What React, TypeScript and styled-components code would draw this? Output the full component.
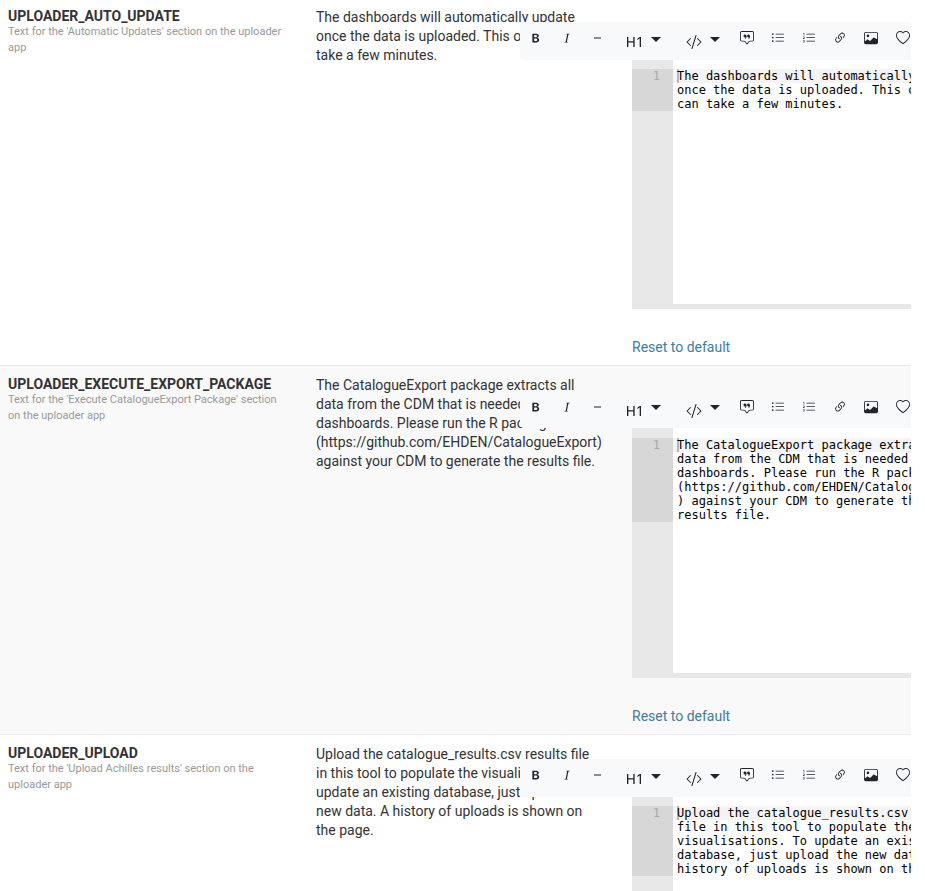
import React from 'react';
import styled, { createGlobalStyle } from 'styled-components';
import {
  BsTypeBold, BsTypeItalic, BsTypeH1, BsCodeSlash, BsChatSquareQuote,
  BsListUl, BsListOl, BsLink45Deg, BsImage, BsHeart,
} from 'react-icons/bs';

const Global = createGlobalStyle`
  * { box-sizing: border-box; }
  html, body { margin: 0; height: 891px; overflow: hidden; background: #fff; }
  body { font-family: Roboto, sans-serif; font-size: 14px; color: #333; }
`;

const Viewport = styled.main`
  width: 911px;
  height: 891px;
  overflow: hidden;
`;

const Table = styled.div`
  margin-top: -2.5px;
`;

const Row = styled.section<{ $shaded: boolean }>`
  display: grid;
  grid-template-columns: 308px 316px 287px;
  height: 368.5px;
  border-bottom: 1px solid #eaeaea;
  background: ${p => (p.$shaded ? '#f9f9f9' : '#fff')};
`;

const NameCell = styled.div`
  padding: 9px 8px;
`;

const Name = styled.div`
  font-weight: 700;
  line-height: 19px;
`;

const Help = styled.div`
  margin-top: -2px;
  font-size: 11px;
  line-height: 16px;
  color: #999;
`;

const ValueCell = styled.div`
  padding: 10px 8px;
  line-height: 19px;
  white-space: nowrap;
`;

const FieldCell = styled.div`
  padding: 24.5px 0 0 8px;
  min-width: 0;
`;

const Toolbar = styled.div`
  position: relative;
  display: flex;
  width: 391px;
  height: 37.5px;
  margin-left: -112px;
  overflow: hidden;
  border-radius: 4px 0 0 4px;
  background: #f8f9fb;
  color: #212529;
`;

const Tool = styled.span<{ $w?: number }>`
  display: flex;
  flex: none;
  align-items: center;
  justify-content: center;
  width: ${p => p.$w ?? 31}px;
  height: 32px;
`;

const DropTool = styled(Tool)<{ $gap: number }>`
  gap: ${p => p.$gap}px;
`;

const Dash = styled.span`
  width: 7px;
  height: 2px;
  background: #8c8f92;
`;

const DropIcon = styled.span`
  display: flex;
  margin-top: 8px;
`;

const Caret = styled.span`
  border: 5px solid transparent;
  border-top-color: #212529;
  border-bottom: 0;
  margin-top: 2px;
`;

const Editor = styled.div`
  display: flex;
  height: 249.5px;
  border-bottom: 5px solid #e8e8e8;
  background: #fff;
  font: 12px/14px "DejaVu Sans Mono", monospace;
  color: #000;
  overflow: hidden;
`;

const Gutter = styled.div`
  flex: none;
  width: 41px;
  padding-top: 9.5px;
  background: #e8e8e8;
`;

const LineNumber = styled.div<{ $lines: number }>`
  height: ${p => p.$lines * 14}px;
  padding-right: 13px;
  background: #d7d7d7;
  color: #aaa;
  text-align: right;
`;

const Code = styled.div`
  flex: 1;
  min-width: 0;
  padding-top: 9.5px;
  overflow: hidden;
`;

const CodeLine = styled.div<{ $active: boolean }>`
  position: relative;
  isolation: isolate;
  height: 14px;
  padding-left: 4px;
  white-space: pre;
  background: ${p => (p.$active ? '#f4f4f4' : 'transparent')};
`;

const Cursor = styled.i`
  position: absolute;
  z-index: -1;
  left: 4px;
  top: 0;
  width: 2px;
  height: 14px;
  background: #b8b8b8;
`;

const Reset = styled.a`
  display: block;
  margin-top: 29px;
  line-height: 19px;
  color: #417d9c;
`;

const settings = [
  {
    name: 'UPLOADER_AUTO_UPDATE',
    help: ["Text for the 'Automatic Updates' section on the uploader", 'app'],
    value: ['The dashboards will automatically update', 'once the data is uploaded. This operation can', 'take a few minutes.'],
    code: ['The dashboards will automatically update', 'once the data is uploaded. This operation', 'can take a few minutes.'],
  },
  {
    name: 'UPLOADER_EXECUTE_EXPORT_PACKAGE',
    help: ["Text for the 'Execute CatalogueExport Package' section", 'on the uploader app'],
    value: ['The CatalogueExport package extracts all', 'data from the CDM that is needed for the', 'dashboards. Please run the R package', '(https://github.com/EHDEN/CatalogueExport)', 'against your CDM to generate the results file.'],
    code: ['The CatalogueExport package extracts all', 'data from the CDM that is needed for the', 'dashboards. Please run the R package', '(https://github.com/EHDEN/CatalogueExport', ') against your CDM to generate the', 'results file.'],
  },
  {
    name: 'UPLOADER_UPLOAD',
    help: ["Text for the 'Upload Achilles results' section on the", 'uploader app'],
    value: ['Upload the catalogue_results.csv results file', 'in this tool to populate the visualisations. To', 'update an existing database, just upload the', 'new data. A history of uploads is shown on', 'the page.'],
    code: ['Upload the catalogue_results.csv results', 'file in this tool to populate the', 'visualisations. To update an existing', 'database, just upload the new data. A', 'history of uploads is shown on the page.'],
  },
];

function EditorToolbar() {
  return (
    <Toolbar>
      <Tool><BsTypeBold size={14} /></Tool>
      <Tool><BsTypeItalic size={14} /></Tool>
      <Tool><Dash /></Tool>
      <DropTool $w={61} $gap={8}><DropIcon><BsTypeH1 size={16} /></DropIcon><Caret /></DropTool>
      <DropTool $w={57} $gap={8}><DropIcon><BsCodeSlash size={16} /></DropIcon><Caret /></DropTool>
      <Tool><BsChatSquareQuote size={14} /></Tool>
      <Tool><BsListUl size={14} /></Tool>
      <Tool><BsListOl size={14} /></Tool>
      <Tool><BsLink45Deg size={14} /></Tool>
      <Tool><BsImage size={14} /></Tool>
      <Tool $w={33}><BsHeart size={14} /></Tool>
    </Toolbar>
  );
}

export default function App() {
  return (
    <Viewport>
      <Global />
      <Table>
        {settings.map((s, i) => (
          <Row key={s.name} $shaded={i % 2 === 1}>
            <NameCell>
              <Name>{s.name}</Name>
              <Help>{s.help.map(t => <div key={t}>{t}</div>)}</Help>
            </NameCell>
            <ValueCell>{s.value.map(t => <div key={t}>{t}</div>)}</ValueCell>
            <FieldCell>
              <EditorToolbar />
              <Editor>
                <Gutter><LineNumber $lines={s.code.length}>1</LineNumber></Gutter>
                <Code>
                  {s.code.map((t, n) => (
                    <CodeLine key={t} $active={n === 0}>{n === 0 && <Cursor />}{t}</CodeLine>
                  ))}
                </Code>
              </Editor>
              <Reset>Reset to default</Reset>
            </FieldCell>
          </Row>
        ))}
      </Table>
    </Viewport>
  );
}
